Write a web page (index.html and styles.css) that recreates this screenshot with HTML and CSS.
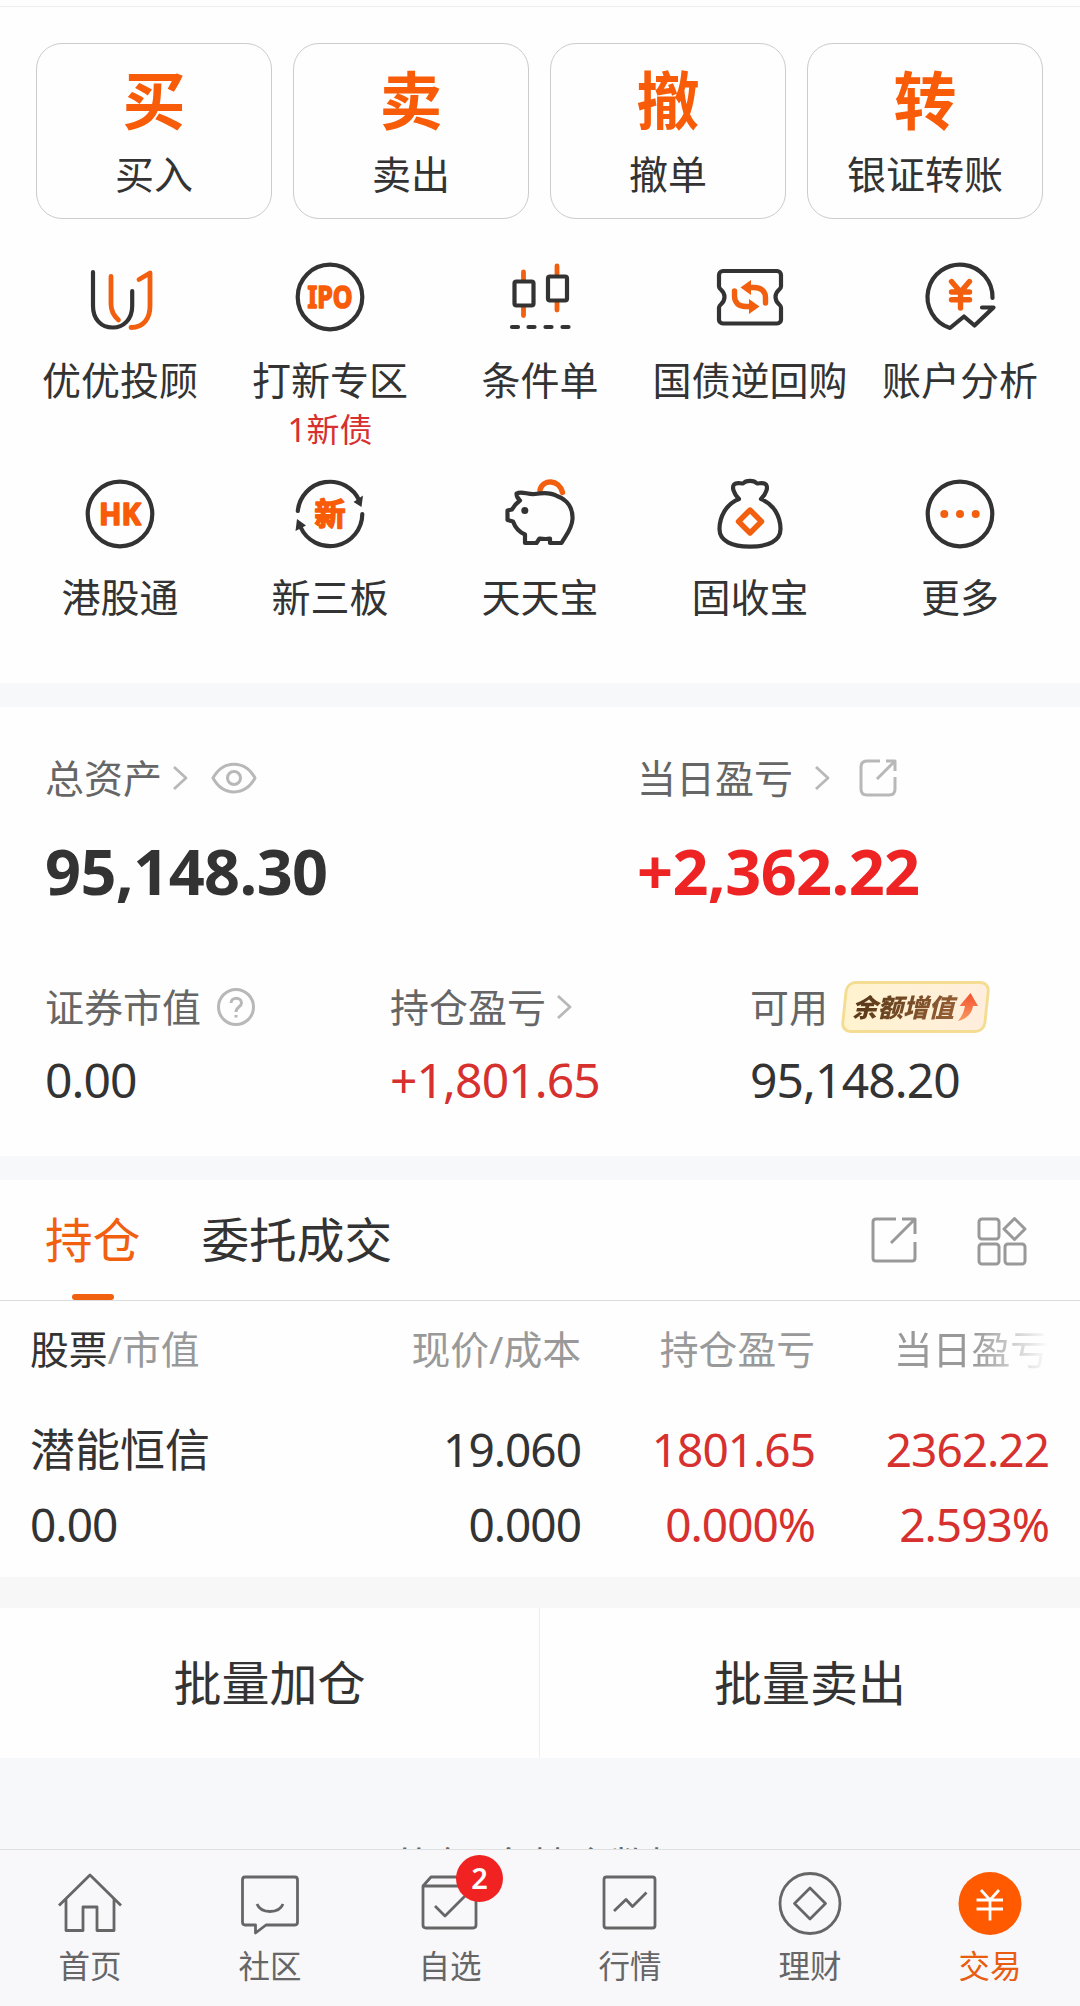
FILE: index.html
```html
<!DOCTYPE html>
<html lang="zh-CN">
<head>
    <meta charset="UTF-8">
    <meta name="viewport" content="width=device-width, initial-scale=1.0">
    <title>交易</title>
    <link rel="stylesheet" href="styles.css">
</head>
<body>

    <main class="content">
        <section class="quick">
            <div class="cards">
                <a class="card"><b>买</b><span>买入</span></a>
                <a class="card"><b>卖</b><span>卖出</span></a>
                <a class="card"><b>撤</b><span>撤单</span></a>
                <a class="card"><b>转</b><span>银证转账</span></a>
            </div>

            <div class="menu">
                <a class="menu-item">
                    <svg class="icon" viewBox="0 0 72 72">
                        <path class="dark" d="M9 11V45C9 58 17 66.5 28.5 66.5S48.2 58 48.2 45V30"/>
                        <path class="orange thick" d="M27 15.5V43C27 50 30 55 34.5 59M47 66.5C60 66.5 66 57 66 45V12L55 18.5"/>
                    </svg>
                    <span>优优投顾</span>
                </a>
                <a class="menu-item">
                    <svg class="icon" viewBox="0 0 72 72">
                        <circle class="dark" cx="36" cy="36" r="32.3"/>
                        <text class="icon-text" x="36" y="47" font-size="30" textLength="45" lengthAdjust="spacingAndGlyphs">IPO</text>
                    </svg>
                    <span>打新专区</span>
                    <em>1新债</em>
                </a>
                <a class="menu-item">
                    <svg class="icon" viewBox="0 0 72 72">
                        <path class="orange thick" d="M19.500 11V19M19.500 46V54.500M53 5V13M53 41V49"/>
                        <rect class="dark" x="10.500" y="20.500" width="19" height="24" rx="2"/>
                        <rect class="dark" x="44" y="15.500" width="19" height="24" rx="2"/>
                        <path class="dark" d="M8 66H14M24.500 66H30.500M41.500 66H47.500M58.500 66H64.500"/>
                    </svg>
                    <span>条件单</span>
                </a>
                <a class="menu-item">
                    <svg class="icon" viewBox="0 0 72 72">
                        <path class="dark" d="M9 10H63A4 4 0 0 1 67 14V25.5C67 29 61.5 29 61.5 36S67 43 67 46.500V58A4 4 0 0 1 63 62.500H9A4 4 0 0 1 5 58V46.500C5 43 10.500 43 10.500 36S5 29 5 25.500V14A4 4 0 0 1 9 10Z"/>
                        <path class="orange arrows" d="M35 26.500H40C48 26.500 51.500 31 51.500 37V42M37 45.500H32C24 45.500 20.500 41 20.500 35V30"/>
                        <path class="fill-orange" d="M26.500 26.500L37 19V34ZM45.500 45.500L35 38V53Z"/>
                    </svg>
                    <span>国债逆回购</span>
                </a>
                <a class="menu-item">
                    <svg class="icon" viewBox="0 0 72 72">
                        <path class="dark" d="M68.500 37A32.500 32.500 0 1 0 26 67L40 55.500L50.500 64.500L69.500 46.500H58"/>
                        <path class="orange arrows" d="M27.500 20.500L36.500 31L45.500 20.500M36.500 31V47M27.500 31H45.500M27.500 38.700H45.500"/>
                    </svg>
                    <span>账户分析</span>
                </a>
                <a class="menu-item">
                    <svg class="icon" viewBox="0 0 72 72">
                        <circle class="dark" cx="36" cy="36" r="32.3"/>
                        <text class="icon-text" x="36" y="47" font-size="30" textLength="42" lengthAdjust="spacingAndGlyphs">HK</text>
                    </svg>
                    <span>港股通</span>
                </a>
                <a class="menu-item">
                    <svg class="icon" viewBox="0 0 72 72">
                        <path class="dark" d="M3.800 33A32.300 32.300 0 0 1 65.500 23M68.300 36A32.300 32.300 0 0 1 6.500 49"/>
                        <path class="fill-dark" d="M59.500 24L69 17.500L67.500 29ZM12 47.500L3 41L1.500 53Z"/>
                        <text class="icon-text" x="36" y="47" font-size="31">新</text>
                    </svg>
                    <span>新三板</span>
                </a>
                <a class="menu-item">
                    <svg class="icon" viewBox="0 0 72 72">
                        <path class="orange arrows" d="M36 12C39 1 55 1 58.500 14.500"/>
                        <path class="dark" d="M12.500 15.500C18 12.500 24 17 31 16C39 14.500 47 14.500 53 18C64 22 69 31 68.500 41C68 51 62 57 57.500 65H46V60.500C42 61.500 39 61 35.500 60.500L32.500 65H21V56.500C15 54 11 49 9 43.500L3.500 42V32.500L8 31.500C10 28 12.500 25 16 22.500C13 20 12.500 18 12.500 15.500Z"/>
                        <circle class="fill-dark" cx="20.800" cy="32.600" r="3.500"/>
                    </svg>
                    <span>天天宝</span>
                </a>
                <a class="menu-item">
                    <svg class="icon" viewBox="0 0 72 72">
                        <path class="dark" d="M25 21C19 15 18 9 20 6.500C22.500 4 26 5.500 29 5.500C32 2 40 2 43 5.500C46 5.500 49.500 4 52 6.500C54 9 53 15 47 21C60 26 66.500 39 66.500 51C66.500 63 54 68.700 36 68.700S5.500 63 5.500 51C5.500 39 12 26 25 21Z"/>
                        <path class="orange arrows" d="M36 32L47.500 43.500L36 55L24.500 43.500Z"/>
                    </svg>
                    <span>固收宝</span>
                </a>
                <a class="menu-item">
                    <svg class="icon" viewBox="0 0 72 72">
                        <circle class="dark" cx="36" cy="36" r="32.3"/>
                        <g class="fill-orange">
                            <circle cx="20.300" cy="36" r="4"/>
                            <circle cx="36" cy="36" r="4"/>
                            <circle cx="51.700" cy="36" r="4"/>
                        </g>
                    </svg>
                    <span>更多</span>
                </a>
            </div>
        </section>

        <section class="assets">
            <div class="assets-main">
                <div>
                    <div class="label">
                        总资产
                        <svg class="arrow near" viewBox="0 0 16 26"><path d="M2 2L14 13L2 24"/></svg>
                        <svg class="eye" viewBox="0 0 46 32">
                            <path d="M2 16C12-2.500 34-2.500 44 16C34 34.500 12 34.500 2 16Z"/>
                            <circle cx="23" cy="16" r="6.500"/>
                        </svg>
                    </div>
                    <div class="total">95,148.30</div>
                </div>
                <div>
                    <div class="label">
                        当日盈亏
                        <svg class="arrow far" viewBox="0 0 16 26"><path d="M2 2L14 13L2 24"/></svg>
                        <svg class="share" viewBox="0 0 38 38">
                            <path d="M21 2H8Q2 2 2 8V30Q2 36 8 36H30Q36 36 36 30V18M27 2H36V12M36 2L18 20"/>
                        </svg>
                    </div>
                    <div class="total up">+2,362.22</div>
                </div>
            </div>
            <div class="assets-sub">
                <div>
                    <div class="label">
                        证券市值
                        <svg class="help" viewBox="0 0 38 38">
                            <circle cx="19" cy="19" r="17.500"/>
                            <path d="M14 15C14 8.500 24.500 8.500 24.500 15C24.500 19 19 19 19 24"/>
                            <path d="M19 27V29.500"/>
                        </svg>
                    </div>
                    <div class="value">0.00</div>
                </div>
                <div>
                    <div class="label">
                        持仓盈亏
                        <svg class="arrow near" viewBox="0 0 16 26"><path d="M2 2L14 13L2 24"/></svg>
                    </div>
                    <div class="value up">+1,801.65</div>
                </div>
                <div>
                    <div class="label">
                        可用
                        <span class="tag">
                            <i>余额增值</i>
                            <svg class="tag-arrow" viewBox="0 0 20 28">
                                <defs>
                                    <linearGradient id="rise" x1="0" y1="0" x2="0" y2="1">
                                        <stop offset="0" stop-color="#f4502f"/>
                                        <stop offset="1" stop-color="#f79a60"/>
                                    </linearGradient>
                                </defs>
                                <path fill="url(#rise)" d="M12.500 0L20 13H15C14 21 8 26 0 28C4 23 6 19 7 13H1.500Z"/>
                            </svg>
                        </span>
                    </div>
                    <div class="value">95,148.20</div>
                </div>
            </div>
        </section>

        <section class="holdings">
            <div class="tabs">
                <a class="tab active">持仓</a>
                <a class="tab">委托成交</a>
                <svg class="tab-share" viewBox="0 0 46 46">
                    <path d="M25 2H5Q2 2 2 5V41Q2 44 5 44H41Q44 44 44 41V25M31 2H44V17M44 2L20 26"/>
                </svg>
                <svg class="tab-grid" viewBox="0 0 50 48">
                    <rect x="2" y="2" width="20" height="20" rx="3"/>
                    <path d="M37.500 1.500L48 12L37.500 22.500L27 12Z"/>
                    <rect x="2" y="27" width="20" height="20" rx="3"/>
                    <rect x="28" y="27" width="20" height="20" rx="3"/>
                </svg>
            </div>
            <div class="row head">
                <span><b>股票</b>/市值</span>
                <span>现价/成本</span>
                <span>持仓盈亏</span>
                <span class="fade">当日盈亏</span>
            </div>
            <div class="row">
                <span class="name">潜能恒信</span>
                <span>19.060</span>
                <span class="up">1801.65</span>
                <span class="up">2362.22</span>
            </div>
            <div class="row">
                <span>0.00</span>
                <span>0.000</span>
                <span class="up">0.000%</span>
                <span class="up">2.593%</span>
            </div>
        </section>

        <section class="batch">
            <a>批量加仓</a>
            <a>批量卖出</a>
        </section>

        <p class="tip">共有1条持仓数据</p>
    </main>

    <nav class="nav">
        <a class="nav-item">
            <svg viewBox="0 0 72 64">
                <path d="M5 33.500L36 3L67 33.500M12 27V58.500H29V35H43V58.500H60V27"/>
            </svg>
            <span>首页</span>
        </a>
        <a class="nav-item">
            <svg viewBox="0 0 72 64">
                <path d="M11 5H61Q63.500 5 63.500 8V50Q63.500 53 61 53H32L21.500 61V53H11Q8.500 53 8.500 50V8Q8.500 5 11 5ZM23 32C27 42 45 42 49 32"/>
            </svg>
            <span>社区</span>
        </a>
        <a class="nav-item">
            <svg viewBox="0 0 72 64">
                <path d="M9 14L17 5H55L62 14V53Q62 56 59 56H12Q9 56 9 53ZM9 14H62M21 34L31 44L51 24"/>
            </svg>
            <span>自选</span>
            <b class="dot">2</b>
        </a>
        <a class="nav-item">
            <svg viewBox="0 0 72 64">
                <rect x="10" y="5" width="51" height="51" rx="2.500"/>
                <path d="M20 39L32 27.500L38.500 34.500L52.500 20.500"/>
            </svg>
            <span>行情</span>
        </a>
        <a class="nav-item">
            <svg viewBox="0 0 72 64">
                <circle cx="36" cy="31.500" r="30"/>
                <path d="M36 16L51.500 31.500L36 47L20.500 31.500Z"/>
            </svg>
            <span>理财</span>
        </a>
        <a class="nav-item current">
            <svg viewBox="0 0 72 64">
                <circle cx="36" cy="31.500" r="31.500"/>
                <path d="M27 18L36 28L45 18M36 28V48.500M22.500 28H49M22.500 37H49"/>
            </svg>
            <span>交易</span>
        </a>
    </nav>

</body>
</html>
```
FILE: styles.css
```css
* {
    box-sizing: border-box;
}
body {
    margin: 0;
    height: 2006px;
    display: flex;
    flex-direction: column;
    overflow: hidden;
    background: #f7f8fa;
    color: #333;
    font-family: "Noto Sans", "Noto Sans CJK SC", sans-serif;
    font-size: 39px;
}
svg {
    display: block;
    flex: none;
    fill: none;
    stroke-linejoin: round;
    overflow: visible;
}
.content {
    height: 1849px;
    overflow: hidden;
}
.up {
    color: #d6302f;
}

/* quick actions */
.quick {
    height: 683px;
    padding-top: 6px;
    background: linear-gradient(#ededed, #ededed) 0 6px / 100% 1px no-repeat #fefefe;
}
.cards {
    display: grid;
    grid-template-columns: repeat(4, 1fr);
    gap: 21px;
    padding: 37px 37px 0 36px;
}
.card {
    height: 176px;
    padding-top: 18px;
    border: 1px solid #ccc;
    border-radius: 26px;
    display: flex;
    flex-direction: column;
    align-items: center;
}
.card b {
    font-size: 63px;
    line-height: 76px;
    color: #f85c08;
}
.card span {
    margin-top: 13px;
    line-height: 46px;
}
.menu {
    display: grid;
    grid-template-columns: repeat(5, 210px);
    grid-template-rows: 217px 205px;
    padding: 42px 15px 0;
}
.menu-item {
    display: flex;
    flex-direction: column;
    align-items: center;
    white-space: nowrap;
}
.menu-item span {
    margin-top: 25px;
    line-height: 44px;
}
.menu-item em {
    margin-top: 8px;
    font-size: 33px;
    font-style: normal;
    line-height: 40px;
    color: #d6302f;
}
.icon {
    width: 72px;
    height: 72px;
    stroke-width: 4.2;
}
.dark {
    stroke: #333;
    stroke-linecap: round;
}
.orange {
    stroke: #f2600f;
    stroke-linecap: round;
}
.thick {
    stroke-width: 4.8;
}
.arrows {
    stroke-width: 5.4;
}
.fill-dark {
    fill: #333;
}
.fill-orange {
    fill: #f2600f;
}
.icon-text {
    fill: #f85c08;
    stroke: #f85c08;
    stroke-width: 1.6;
    font-weight: bold;
    text-anchor: middle;
}

/* assets */
.assets {
    height: 449px;
    margin-top: 24px;
    padding: 46px 0 0 45px;
    background: #fefefe;
}
.assets-main {
    display: grid;
    grid-template-columns: 592px 1fr;
}
.assets-sub {
    display: grid;
    grid-template-columns: 345px 360px 1fr;
    margin-top: 75px;
}
.label {
    height: 50px;
    display: flex;
    align-items: center;
    line-height: 50px;
    color: #666;
    white-space: nowrap;
}
.assets-sub .label {
    height: 52px;
}
.label svg {
    stroke: #b8b8b8;
    stroke-width: 3;
}
.label .arrow {
    width: 16px;
    height: 26px;
    stroke-width: 2.8;
}
.arrow.near {
    margin-left: 10px;
}
.arrow.far {
    margin-left: 21px;
}
.eye {
    width: 46px;
    height: 32px;
    margin-left: 23px;
}
.share {
    width: 38px;
    height: 38px;
    margin-left: 29px;
}
.help {
    width: 38px;
    height: 38px;
    margin-left: 16px;
}
.total {
    margin-top: 33px;
    font-size: 63px;
    font-weight: bold;
    line-height: 70px;
    letter-spacing: -0.6px;
}
.total.up {
    color: #ee2424;
}
.value {
    margin-top: 19px;
    font-size: 48px;
    line-height: 56px;
    letter-spacing: -0.9px;
}
.tag {
    position: relative;
    z-index: 0;
    width: 149px;
    height: 52px;
    margin-left: 13px;
    padding-left: 11px;
    display: flex;
    align-items: center;
}
.tag::before {
    content: "";
    position: absolute;
    z-index: -1;
    inset: 0 2px;
    border: 3px solid #f4dd92;
    border-radius: 10px;
    background: linear-gradient(90deg, #fff3cf, #ffeedd);
    transform: skewX(-6deg);
}
.tag i {
    padding-right: 4px;
    font-size: 25.5px;
    font-weight: 900;
    line-height: 40px;
    color: transparent;
    background: linear-gradient(120deg, #4f3314, #9d6338);
    background-clip: text;
    -webkit-background-clip: text;
}
.label .tag-arrow {
    width: 20px;
    height: 28px;
    stroke: none;
}

/* holdings */
.holdings {
    height: 397px;
    margin-top: 24px;
    background: #fefefe;
}
.tabs {
    height: 121px;
    padding: 0 53px 0 45px;
    border-bottom: 1px solid #dcdcdc;
    display: flex;
}
.tab {
    position: relative;
    margin-right: 61px;
    font-size: 47.7px;
    line-height: 120px;
}
.tab.active {
    color: #f0600f;
}
.tab.active::after {
    content: "";
    position: absolute;
    left: 27px;
    bottom: 0;
    width: 42px;
    height: 6px;
    border-radius: 3px;
    background: #f0600f;
}
.tabs svg {
    stroke: #999;
    stroke-width: 3;
}
.tab-share {
    width: 46px;
    height: 46px;
    margin: 37px 0 0 auto;
}
.tab-grid {
    width: 50px;
    height: 48px;
    margin: 37px 0 0 60px;
}
.row {
    display: grid;
    grid-template-columns: 317px 234px 234px 234px;
    padding: 0 31px 0 30px;
    font-size: 46px;
    line-height: 74px;
    letter-spacing: -1px;
    text-align: right;
    white-space: nowrap;
}
.row span:first-child {
    text-align: left;
}
.row .name {
    padding-top: 1px;
    font-size: 45px;
    letter-spacing: 0;
}
.row.head {
    margin-bottom: 15px;
    font-size: 38.8px;
    line-height: 96px;
    letter-spacing: 0;
    color: #999;
}
.row.head b {
    font-weight: normal;
    color: #333;
}
.fade {
    -webkit-mask-image: linear-gradient(90deg, #000 68%, transparent);
    mask-image: linear-gradient(90deg, #000 68%, transparent);
}

/* batch buttons */
.batch {
    height: 181px;
    border-top: 31px solid #f7f7f7;
    background: #fefefe;
    display: grid;
    grid-template-columns: 540px 540px;
}
.batch a {
    font-size: 48px;
    line-height: 150px;
    text-align: center;
}
.batch a:first-child {
    border-right: 1px solid #eee;
}
.tip {
    margin: 86px 0 0;
    line-height: 42px;
    text-align: center;
    color: #666;
}

/* bottom navigation */
.nav {
    height: 157px;
    flex: none;
    border-top: 1px solid #dedfe1;
    background: #f8f8fb;
    display: grid;
    grid-template-columns: repeat(6, 1fr);
}
.nav-item {
    position: relative;
    padding-top: 22px;
    display: flex;
    flex-direction: column;
    align-items: center;
    font-size: 31.5px;
    color: #666;
}
.nav-item svg {
    width: 72px;
    height: 64px;
    stroke: #666;
    stroke-width: 2.8;
}
.nav-item span {
    margin-top: 10px;
    line-height: 40px;
}
.dot {
    position: absolute;
    left: 96px;
    top: 5px;
    width: 47px;
    height: 47px;
    border-radius: 50%;
    background: #f02222;
    color: #fff;
    font-size: 29px;
    font-weight: 600;
    line-height: 46px;
    text-align: center;
}
.nav-item.current {
    color: #e85d10;
}
.nav-item.current circle {
    fill: #ff5a00;
    stroke: none;
}
.nav-item.current path {
    stroke: #fff;
}
```
